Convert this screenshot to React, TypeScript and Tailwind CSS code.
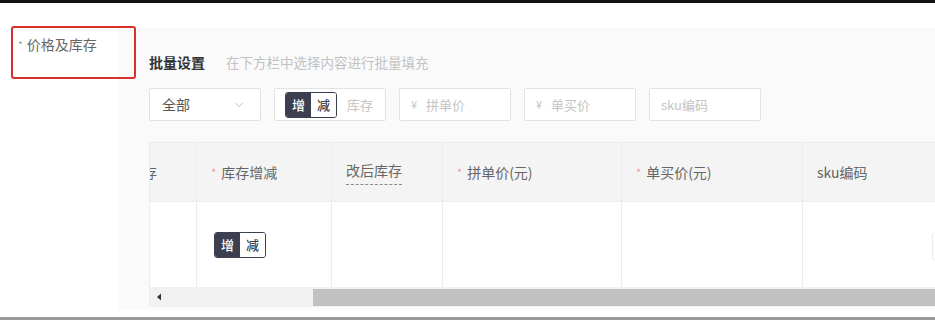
import { ChevronDown } from "lucide-react";

const font = { fontFamily: '"Noto Sans CJK SC", "Noto Sans", sans-serif' };

function Toggle() {
  return (
    <div className="flex h-[26px] w-[52px] rounded-[3px] border border-[#3b3f50] overflow-hidden text-[13px] font-medium">
      <span className="flex-1 flex items-center justify-center bg-[#3b3f50] text-white">增</span>
      <span className="flex-1 flex items-center justify-center bg-white text-[#3b3f50]">减</span>
    </div>
  );
}

function PriceInput({ placeholder, yen = true }: { placeholder: string; yen?: boolean }) {
  return (
    <div className="w-[112px] h-[33px] bg-white border border-[#e2e2e2] rounded-[2px] flex items-center pl-[11px] text-[13px] text-[#c4c4c4]">
      {yen && <span className="mr-[9px] text-[11px]">¥</span>}
      {placeholder}
    </div>
  );
}

function Req() {
  return <span className="text-[#f39a9a] text-[11px] mr-[5px]">*</span>;
}

export default function App() {
  const cols = [
    { w: "w-[46px]", head: null },
    { w: "w-[135px]", head: <><Req />库存增减</> },
    { w: "w-[111px]", head: <span className="border-b border-dashed border-[#888] pb-[3px]">改后库存</span> },
    { w: "w-[179px]", head: <><Req />拼单价(元)</> },
    { w: "w-[181px]", head: <><Req />单买价(元)</> },
    { w: "w-[130px]", head: "sku编码" },
  ];

  return (
    <div className="relative w-[935px] h-[320px] bg-white overflow-hidden" style={font}>
      <div className="h-[3px] bg-[#111]" />

      <div className="flex mt-[25px]">
        {/* left label */}
        <div className="w-[118px] shrink-0 pl-[18px] pt-[6px] text-[14px] text-[#666]">
          <span className="text-[10px] text-[#999] mr-[4px] relative -top-[1px]">*</span>价格及库存
        </div>

        {/* panel */}
        <div className="flex-1 min-w-0 h-[282px] bg-[#fafafa] pl-[31px] pt-[25px]">
          <div className="flex items-center h-[18px] text-[14px]">
            <span className="font-bold text-[#333]">批量设置</span>
            <span className="ml-[21px] text-[#c2c2c2] text-[13.5px]">在下方栏中选择内容进行批量填充</span>
          </div>

          <div className="flex items-center gap-[13px] mt-[17px]">
            <div className="w-[112px] h-[33px] bg-white border border-[#e2e2e2] rounded-[2px] flex items-center justify-between pl-[12px] pr-[14px] text-[14px] text-[#555]">
              全部
              <ChevronDown size={14} strokeWidth={1.5} className="text-[#b8b8b8]" />
            </div>
            <div className="w-[112px] h-[33px] bg-white border border-[#e2e2e2] rounded-[2px] flex items-center pl-[10px] text-[13px] text-[#c4c4c4]">
              <Toggle />
              <span className="ml-[10px]">库存</span>
            </div>
            <PriceInput placeholder="拼单价" />
            <PriceInput placeholder="单买价" />
            <PriceInput placeholder="sku编码" yen={false} />
          </div>

          {/* table */}
          <div className="mt-[21px] overflow-hidden border-l border-t border-[#ececec]">
            <div className="flex h-[59px] bg-[#f4f4f4] border-b border-[#ececec] text-[14px] text-[#666] w-[1000px]">
              {cols.map((c, i) => (
                <div
                  key={i}
                  className={`${c.w} shrink-0 flex items-center overflow-hidden ${i > 0 ? "border-l border-[#ececec] px-[14px]" : "justify-end pr-[39px]"}`}
                >
                  {i === 0 ? <span className="whitespace-nowrap">库存</span> : c.head}
                </div>
              ))}
              <div className="flex-1" />
            </div>
            <div className="flex h-[85px] bg-white w-[1000px]">
              {cols.map((c, i) => (
                <div key={i} className={`${c.w} shrink-0 flex items-center ${i > 0 ? "border-l border-[#ececec]" : ""} ${i === 1 ? "pl-[17px]" : ""}`}>
                  {i === 1 && <Toggle />}
                </div>
              ))}
              <div className="flex-1 flex items-center pt-[4px]">
                <div className="w-[60px] h-[27px] border border-[#ececec] rounded-[2px]" />
              </div>
            </div>
            {/* horizontal scrollbar */}
            <div className="flex items-center h-[20px] bg-[#f1f1f1]">
              <div className="w-[163px] shrink-0 pl-[6px] flex items-center">
                <svg width="6" height="8" viewBox="0 0 6 8">
                  <path d="M5 0.5 L1 4 L5 7.5 Z" fill="#333" />
                </svg>
              </div>
              <div className="flex-1 h-[17px] bg-[#c1c1c1]" />
            </div>
          </div>
        </div>
      </div>

      <div className="mt-[7px] h-[3px] bg-[#9a9a9a]" />

      {/* annotation box */}
      <div className="absolute left-[11px] top-[26px] w-[125px] h-[53px] border-2 border-[#d9302b] rounded-[3px]" />
    </div>
  );
}
